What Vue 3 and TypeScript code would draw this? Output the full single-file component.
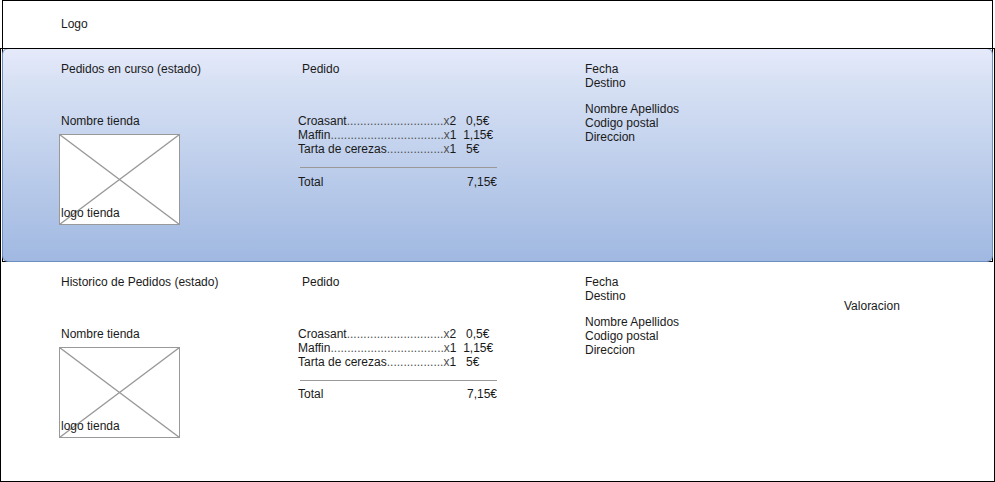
<script setup lang="ts">
interface OrderBlock {
  id: string
  title: string
  rating?: string
}

interface OrderLine {
  name: string
  leader: string
  amount: string
}

const blocks: OrderBlock[] = [
  { id: 'current', title: 'Pedidos en curso (estado)' },
  { id: 'history', title: 'Historico de Pedidos (estado)', rating: 'Valoracion' },
]

const dots = (count: number): string => '.'.repeat(count)

const lines: OrderLine[] = [
  { name: 'Croasant', leader: `${dots(29)}x`, amount: '2   0,5€' },
  { name: 'Maffin', leader: `${dots(34)}x`, amount: '1  1,15€' },
  { name: 'Tarta de cerezas', leader: `${dots(17)}x`, amount: '1   5€' },
]
</script>

<template>
  <div class="page">
    <div class="sheet"></div>
    <div class="frame"></div>
    <header class="header">Logo</header>
    <main>
      <section v-for="block in blocks" :key="block.id" class="order" :class="block.id">
        <div class="shop">
          <h2 class="title">{{ block.title }}</h2>
          <p class="shop-name">Nombre tienda</p>
          <div class="picture">
            <svg class="cross" width="121" height="91" viewBox="0 0 121 91">
              <rect x="0.5" y="0.5" width="120" height="90" fill="#fff" stroke="#999" />
              <path d="M0.5 0.5L120.5 90.5M120.5 0.5L0.5 90.5" fill="none" stroke="#999" stroke-width="1.35" />
            </svg>
            <span class="caption">logo tienda</span>
          </div>
        </div>
        <div class="detail">
          <h3 class="title detail-title">Pedido</h3>
          <div class="lines">
            <p v-for="line in lines" :key="line.name">{{ line.name }}<span class="leader">{{ line.leader }}</span>{{ line.amount }}</p>
          </div>
          <div class="rule"></div>
          <div class="total"><span>Total</span><span>7,15€</span></div>
        </div>
        <div class="delivery">
          <p>Fecha</p>
          <p>Destino</p>
          <address>
            <p>Nombre Apellidos</p>
            <p>Codigo postal</p>
            <p>Direccion</p>
          </address>
        </div>
        <p v-if="block.rating" class="rating">{{ block.rating }}</p>
      </section>
    </main>
  </div>
</template>

<style>
body {
  margin: 0;
  background: #fff;
}
</style>

<style scoped>
.page {
  position: relative;
  isolation: isolate;
  box-sizing: border-box;
  width: 995px;
  height: 482px;
  overflow: hidden;
  font: 12px/14px "Liberation Sans", Arial, sans-serif;
  color: #1a1a1a;
}

p,
h2,
h3 {
  margin: 0;
  font: inherit;
  white-space: pre;
}

/* Overlapping outlines: the sheet lies behind the blue panel, the frame above it */
.sheet,
.frame {
  position: absolute;
  box-sizing: border-box;
  border: 1px solid #000;
  pointer-events: none;
}

.sheet {
  z-index: -1;
  inset: 0 2px auto;
  height: 262px;
}

.frame {
  inset: 48px 0 0;
}

.header {
  box-sizing: border-box;
  height: 48px;
  padding: 17px 61px;
}

.order {
  box-sizing: border-box;
  display: grid;
  grid-template-columns: 237px 287px 259px auto;
  height: 213px;
  margin: 0 2px;
  padding: 13px 0 0 58px;
  border: 1px solid transparent;
}

.current {
  height: 214px;
  margin-bottom: -1px;
  border-color: #6c8ebf;
  border-radius: 6px;
  background: linear-gradient(#e6eafb, #d7e1f4 16%, #a0b8e1) border-box;
}

.shop-name {
  margin-top: 38px;
}

.picture {
  position: relative;
  width: 121px;
  height: 91px;
  margin: 6px 0 0 -2px;
}

.cross {
  display: block;
}

.caption {
  position: absolute;
  left: 2px;
  bottom: 5px;
}

.detail {
  width: 199px;
}

.detail-title {
  padding-left: 4px;
}

.lines {
  margin-top: 38px;
}

.leader {
  color: #505050;
}

.rule {
  height: 1px;
  margin: 11px 0 7px 2px;
  background: #999;
}

.history .rule {
  margin-bottom: 6px;
}

.total {
  display: flex;
  justify-content: space-between;
}

address {
  margin-top: 12px;
  font-style: normal;
}

.rating {
  margin-top: 24px;
}
</style>
